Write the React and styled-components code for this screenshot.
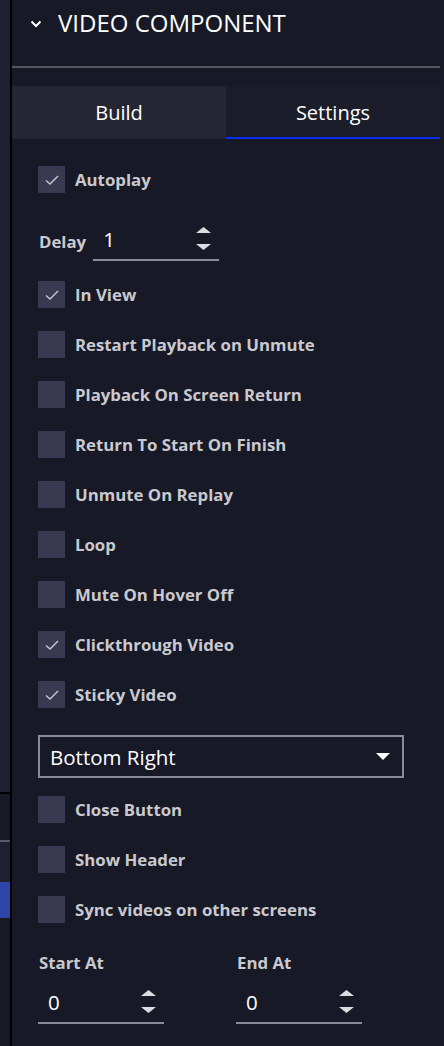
import React from 'react'
import styled, { createGlobalStyle } from 'styled-components'

const Global = createGlobalStyle`
  html, body { margin: 0; padding: 0; background: #171927; }
  body { font-family: "Open Sans", "Noto Sans", sans-serif; }
  * { box-sizing: border-box; }
`

const options = [
  { label: 'In View', checked: true },
  { label: 'Restart Playback on Unmute' },
  { label: 'Playback On Screen Return' },
  { label: 'Return To Start On Finish' },
  { label: 'Unmute On Replay' },
  { label: 'Loop' },
  { label: 'Mute On Hover Off' },
  { label: 'Clickthrough Video', checked: true },
  { label: 'Sticky Video', checked: true },
]

const stickyOptions = [
  { label: 'Close Button' },
  { label: 'Show Header' },
  { label: 'Sync videos on other screens' },
]

const Check = ({ checked }) => (
  <Box>
    {checked && (
      <svg width="16" height="12" viewBox="0 0 16 12">
        <polyline points="2,6.5 6,10 14,2" fill="none" stroke="#c4c4cc" strokeWidth="1.5" />
      </svg>
    )}
  </Box>
)

const Spinner = () => (
  <svg width="15" height="24" viewBox="0 0 15 24">
    <polygon points="7.5,0 15,6 0,6" fill="#dcdce0" />
    <polygon points="0,17 15,17 7.5,23" fill="#dcdce0" />
  </svg>
)

const NumberField = ({ value }) => (
  <Field>
    <FieldValue>{value}</FieldValue>
    <Spinner />
  </Field>
)

const App = () => {
  return (
    <>
      <Global />
      <Root>
        <Rail>
          <RailBlock $h={792} $bg="#1e2030" />
          <RailBlock $h={2} $bg="#000" />
          <RailBlock $h={46} $bg="#171927" />
          <RailBlock $h={2} $bg="#5a5a66" />
          <RailBlock $h={40} $bg="#1e2030" />
          <RailBlock $h={36} $bg="#3045a8" />
          <RailBlock $h={128} $bg="#171927" />
        </Rail>
        <Split />
        <Panel>
          <Header>
            <svg width="12" height="8" viewBox="0 0 12 8">
              <polyline points="1.5,1.5 6,6 10.5,1.5" fill="none" stroke="#fff" strokeWidth="2" />
            </svg>
            <Title>VIDEO COMPONENT</Title>
          </Header>
          <Tabs>
            <Tab>Build</Tab>
            <Tab $active>Settings</Tab>
          </Tabs>
          <Body>
            <CheckRow $mb={28}>
              <Check checked />
              <Label>Autoplay</Label>
            </CheckRow>
            <DelayRow>
              <Label>Delay</Label>
              <NumberField value="1" />
            </DelayRow>
            {options.map((o) => (
              <CheckRow key={o.label}>
                <Check checked={o.checked} />
                <Label>{o.label}</Label>
              </CheckRow>
            ))}
            <Select>
              <span>Bottom Right</span>
              <svg width="14" height="8" viewBox="0 0 14 8">
                <polygon points="0,0 14,0 7,7" fill="#fff" />
              </svg>
            </Select>
            {stickyOptions.map((o) => (
              <CheckRow key={o.label}>
                <Check checked={o.checked} />
                <Label>{o.label}</Label>
              </CheckRow>
            ))}
            <Range>
              <RangeCol>
                <Label>Start At</Label>
                <NumberField value="0" />
              </RangeCol>
              <RangeCol>
                <Label>End At</Label>
                <NumberField value="0" />
              </RangeCol>
            </Range>
          </Body>
        </Panel>
      </Root>
    </>
  )
}

const Root = styled.div`
  display: flex;
  min-height: 100vh;
  background: #171927;
`

const Rail = styled.div`
  width: 10px;
  flex-shrink: 0;
  display: flex;
  flex-direction: column;
`

const RailBlock = styled.div`
  height: ${(p) => p.$h}px;
  flex-shrink: 0;
  background: ${(p) => p.$bg};
`

const Split = styled.div`
  width: 2px;
  flex-shrink: 0;
  background: #000;
`

const Panel = styled.div`
  flex: 1;
  min-width: 0;
  padding-right: 4px;
  background: #171927;
`

const Header = styled.div`
  height: 68px;
  display: flex;
  align-items: flex-start;
  gap: 16px;
  padding: 0 0 0 18px;
  border-bottom: 2px solid #56565f;

  svg {
    margin-top: 20px;
  }
`

const Title = styled.div`
  color: #fff;
  font-size: 24px;
  line-height: 1;
  margin-top: 11px;
`

const Tabs = styled.div`
  margin-top: 18px;
  display: grid;
  grid-template-columns: 1fr 1fr;
  height: 53px;
`

const Tab = styled.div`
  display: flex;
  align-items: center;
  justify-content: center;
  padding-top: 1px;
  color: #fff;
  font-size: 20px;
  background: ${(p) => (p.$active ? '#1b1d2a' : '#242633')};
  border-bottom: 2px solid ${(p) => (p.$active ? '#0a2df0' : 'transparent')};
`

const Body = styled.div`
  padding: 27px 36px 0 26px;
`

const CheckRow = styled.div`
  display: flex;
  align-items: center;
  gap: 10px;
  height: 27px;
  margin-bottom: ${(p) => (p.$mb != null ? p.$mb : 23)}px;
`

const Box = styled.div`
  width: 27px;
  height: 27px;
  flex-shrink: 0;
  background: #393a52;
  display: flex;
  align-items: center;
  justify-content: center;
`

const Label = styled.div`
  color: #c9c9cf;
  font-size: 16.8px;
  font-weight: 700;
  white-space: nowrap;
`

const DelayRow = styled.div`
  display: flex;
  align-items: center;
  gap: 7px;
  height: 40px;
  margin-bottom: 20px;
  padding-left: 1px;
`

const Field = styled.div`
  width: 126px;
  height: 40px;
  display: flex;
  align-items: center;
  justify-content: space-between;
  padding: 0 8px 2px 10px;
  border-bottom: 2px solid #8b8b97;
`

const FieldValue = styled.span`
  color: #fff;
  font-size: 20.5px;
`

const Select = styled.div`
  margin: 27px 0 18px 0;
  width: 366px;
  height: 43px;
  border: 2px solid #8b8b97;
  display: flex;
  align-items: center;
  justify-content: space-between;
  padding: 0 12px 0 10px;
  color: #fff;
  font-size: 20.5px;
`

const Range = styled.div`
  display: grid;
  grid-template-columns: 198px 198px;
  padding-top: 5px;
`

const RangeCol = styled.div`
  display: flex;
  flex-direction: column;
  align-items: flex-start;
  gap: 10px;

  & > div:first-child {
    padding-left: 1px;
  }
`

export default App
